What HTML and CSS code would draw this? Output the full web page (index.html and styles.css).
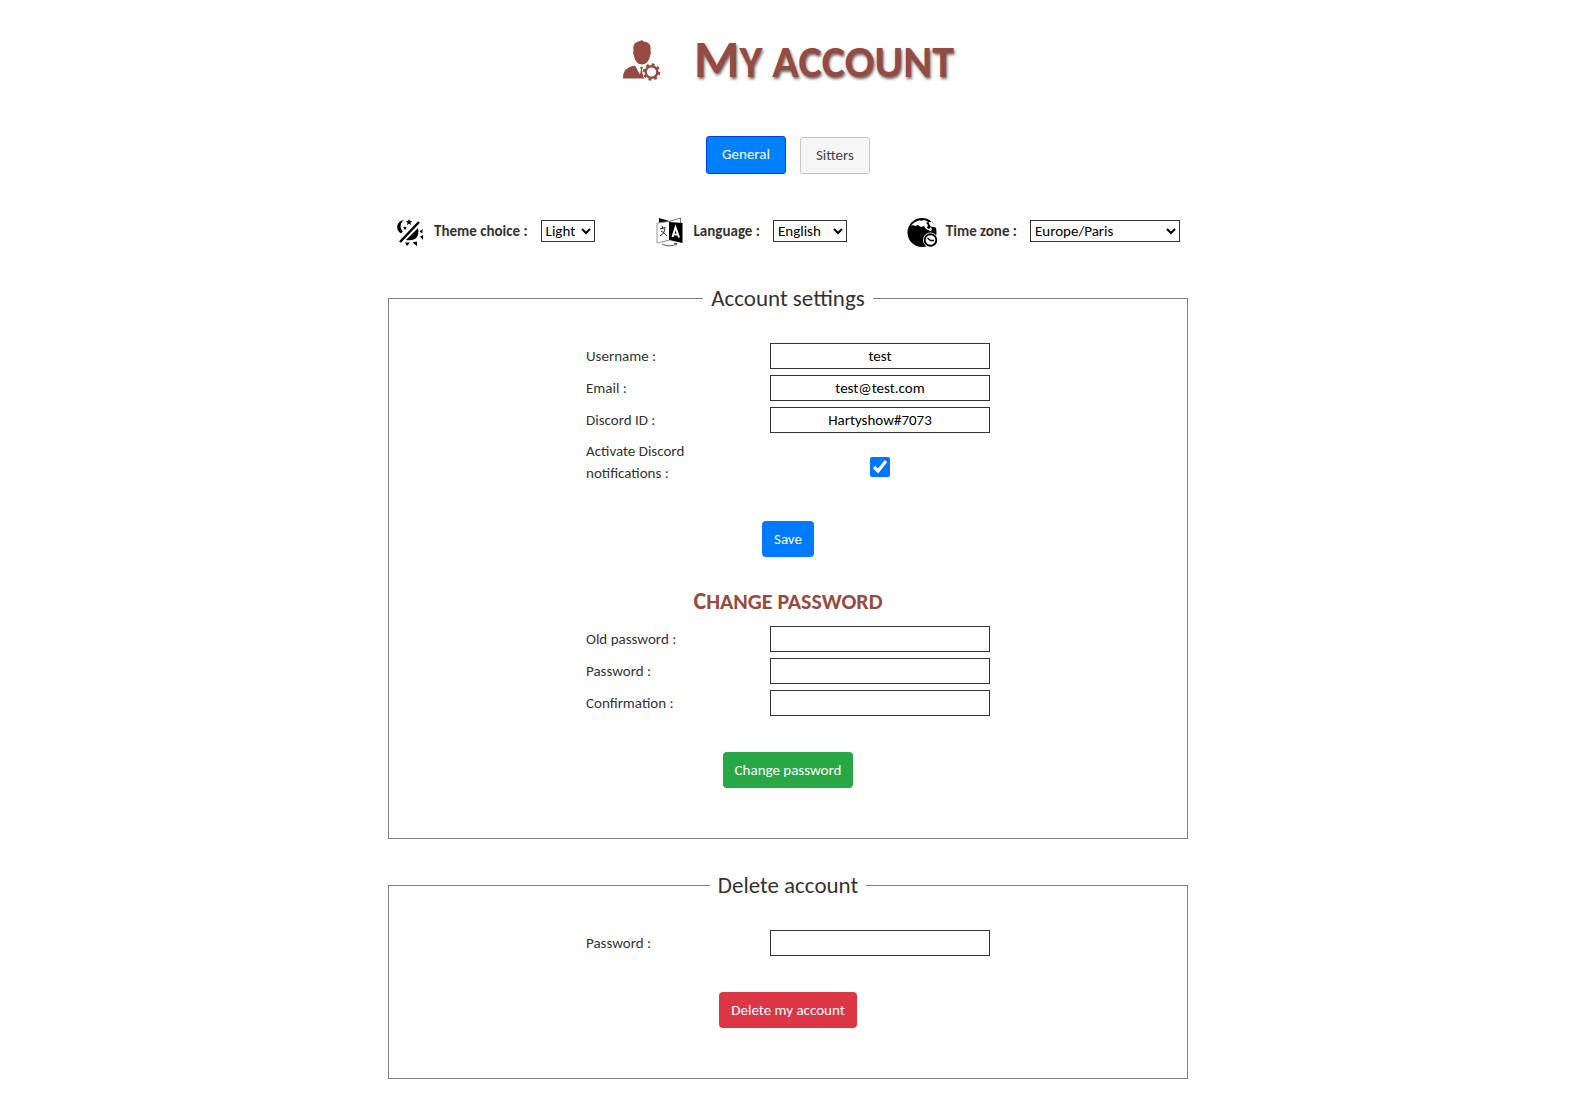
FILE: index.html
```html
<!DOCTYPE html>
<html lang="en">
<head>
    <meta charset="utf-8">
    <title>My account</title>
    <link rel="stylesheet" href="styles.css">
</head>
<body>
    <div class="container">
        <!-- Title -->
        <header class="title">
            <svg class="title-icon" viewBox="0 0 40 42" aria-hidden="true">
                <path d="M20 1c-1 1-3 1-5 2-3 1-4 4-3.500 9-.5 1-.5 3 .5 5 1 5 4 8.500 8 8.500s7-3.500 8-8.500c1-2 1-4 .5-5 .5-5-.5-8-4.500-9-2 0-3-1-4-2z"/>
                <path d="M1 39.500c0-8 3-11 12-13l5 9 1-5-1-2 1.500-1 1.500 1-1 2 .5 5 2-4c-2 3-2 6 0 8z"/>
                <circle cx="29.500" cy="33" r="5.800" fill="#fff" stroke="currentColor" stroke-width="2.400"/>
                <circle cx="29.500" cy="33" r="7.600" fill="none" stroke="currentColor" stroke-width="2.200" stroke-dasharray="2.980 2.980"/>
            </svg>
            <h1>My account</h1>
        </header>

        <!-- Tabs -->
        <nav class="tabs">
            <button type="button" class="tab active">General</button>
            <button type="button" class="tab">Sitters</button>
        </nav>

        <!-- Preferences -->
        <div class="preferences">
            <div class="preference">
                <svg class="icon" viewBox="-1 -2 30 30" aria-hidden="true">
                    <path d="M7 2C-1 3-2 12 4 15.500l1.800-2C2.500 10 3 5 7 2z"/>
                    <path d="M12 1l.9 2.100 2.300.1-1.800 1.500.7 2.300L12 5.700 9.900 7l.7-2.300-1.800-1.500 2.300-.1zM8 8l.5 1.300 1.500.2-1.100.9.300 1.500-1.200-.8-1.200.8.3-1.500-1.100-.9 1.500-.2z"/>
                    <path d="M3 24L22 4" fill="none" stroke="#000" stroke-width="2.500"/>
                    <path d="M21 10c2 9-3 13.500-12 12z"/>
                    <path d="M25.500 11v4.500l-3-2zM23 18.500l3-1.500v5zM8 24.500h5l-3 3.500zM15.500 24.500l4.500-1v4.500z"/>
                </svg>
                <label for="theme">Theme choice :</label>
                <select id="theme" class="select-theme">
                    <option>Light</option>
                    <option>Dark</option>
                </select>
            </div>
            <div class="preference">
                <svg class="icon" viewBox="0 -2 30 30" aria-hidden="true">
                    <path d="M3 0l12 3.500L3 6z"/>
                    <path d="M24.500 0L13 3.500M24.500 0v5" fill="none" stroke="#555" stroke-width=".8"/>
                    <path d="M1 5l12.500-1.500v18.500L1 25z" fill="#fff" stroke="#888" stroke-width=".9"/>
                    <path d="M13 4l13.500 1v20L13 22z"/>
                    <path d="M4 11l5-1.500c0 4-2 7-5 8.500M5 13c2 1 4 3 6 5M6 8l1 2.500" fill="none" stroke="#222" stroke-width="1"/>
                    <path d="M16.500 19l3-9.500 3.500 10M17.500 16.500h4" fill="none" stroke="#fff" stroke-width="2"/>
                    <path d="M6 26c5 2.500 11 2.500 15-.5M21 25.500l-3-.2M21 25.500l-1 2" fill="none" stroke="#444" stroke-width=".9"/>
                </svg>
                <label for="language">Language :</label>
                <select id="language" class="select-language">
                    <option>English</option>
                    <option>Français</option>
                </select>
            </div>
            <div class="preference">
                <svg class="icon" viewBox="0 -2 30 30" aria-hidden="true">
                    <circle cx="14" cy="14.500" r="14.500"/>
                    <path d="M4 6.500c2-2 5-4 9-4.500l-1 1 5-1 3 2-2 1 2 2-1 3 2 1 2-2 1 3-2 1-4-2-2-3-3 1-3-2-3 1-2-1-2 1z" fill="#fff"/>
                    <path d="M20.500 4.500l3-1 5 6-6-1z" fill="#fff"/>
                    <circle cx="22.500" cy="22" r="7.500" fill="#fff"/>
                    <circle cx="22.500" cy="22" r="5.800" fill="#fff" stroke="#000" stroke-width="1.900"/>
                    <path d="M19.500 20l3 2.500h3.500" fill="none" stroke="#000" stroke-width="1.500"/>
                </svg>
                <label for="timezone">Time zone :</label>
                <select id="timezone" class="select-timezone">
                    <option>Europe/Paris</option>
                    <option>Europe/London</option>
                </select>
            </div>
        </div>

        <!-- Account settings -->
        <fieldset>
            <legend>Account settings</legend>
            <form class="form">
                <div class="row">
                    <label for="username">Username :</label>
                    <input type="text" id="username" value="test">
                </div>
                <div class="row">
                    <label for="email">Email :</label>
                    <input type="text" id="email" value="test@test.com">
                </div>
                <div class="row">
                    <label for="discord">Discord ID :</label>
                    <input type="text" id="discord" value="Hartyshow#7073">
                </div>
                <div class="row row-check">
                    <label for="notifications">Activate Discord notifications :</label>
                    <div class="check">
                        <input type="checkbox" id="notifications" checked>
                    </div>
                </div>
                <button type="button" class="btn btn-primary">Save</button>
            </form>

            <h2>Change password</h2>
            <form class="form">
                <div class="row">
                    <label for="old-password">Old password :</label>
                    <input type="password" id="old-password">
                </div>
                <div class="row">
                    <label for="new-password">Password :</label>
                    <input type="password" id="new-password">
                </div>
                <div class="row">
                    <label for="confirmation">Confirmation :</label>
                    <input type="password" id="confirmation">
                </div>
                <button type="button" class="btn btn-success">Change password</button>
            </form>
        </fieldset>

        <!-- Delete account -->
        <fieldset>
            <legend>Delete account</legend>
            <form class="form">
                <div class="row">
                    <label for="delete-password">Password :</label>
                    <input type="password" id="delete-password">
                </div>
                <button type="button" class="btn btn-danger">Delete my account</button>
            </form>
        </fieldset>
    </div>
</body>
</html>
```
FILE: styles.css
```css
* {
    box-sizing: border-box;
}

body {
    margin: 0;
    background-color: #fff;
    color: #333;
    font-family: Calibri, Carlito, Lato, sans-serif;
    font-size: 15px;
    line-height: 22px;
}

input,
select,
button {
    font-family: inherit;
    font-size: inherit;
}

.container {
    max-width: 800px;
    margin: 0 auto;
    padding: 30px 0 22px;
}

/* Title */
.title {
    display: flex;
    justify-content: center;
    align-items: center;
    gap: 32px;
    height: 60px;
    color: #954b42;
}

.title-icon {
    width: 40px;
    height: 42px;
    fill: currentColor;
}

h1,
h2 {
    color: #954b42;
    text-transform: uppercase;
}

h1 {
    margin: 0;
    font-size: 44px;
    line-height: 60px;
    text-shadow: 1px 2px 3px rgba(0,0,0,0.6);
}

h1::first-letter {
    font-size: 52px;
}

/* Tabs */
.tabs {
    display: flex;
    justify-content: center;
    align-items: flex-end;
    gap: 14px;
    margin-top: 46px;
}

.tab {
    height: 37px;
    padding: 0 15px 2px;
    border: 1px solid #c5c5c5;
    border-radius: 3px;
    background-color: #f6f6f6;
    color: #454545;
    cursor: pointer;
}

.tab.active {
    height: 38px;
    border-color: #003eff;
    background-color: #007fff;
    color: #fff;
}

/* Preferences */
.preferences {
    display: flex;
    justify-content: space-between;
    margin: 42px 8px 0;
    padding-bottom: 6px;
}

.preference {
    display: flex;
    align-items: center;
}

.preference label {
    margin: 0 13px 0 8px;
    font-weight: bold;
}

.icon {
    width: 30px;
    height: 30px;
    overflow: visible;
}

select {
    height: 22px;
    padding: 0;
    border: 1px solid #333;
    border-radius: 0;
    background-color: #fff;
    color: #000;
}

.select-theme {
    width: 54px;
}

.select-language {
    width: 74px;
}

.select-timezone {
    width: 150px;
}

/* Blocks */
fieldset {
    margin: 30px 0 0;
    padding: 29px 0 50px;
    border: 1px solid #808080;
}

legend {
    margin: 0 auto;
    padding: 0 8px;
    font-size: 23px;
    line-height: 32px;
}

h2 {
    margin: 28px 0 8px;
    font-size: 22px;
    line-height: 32px;
    text-align: center;
}

h2::first-letter {
    font-size: 24px;
}

.form {
    display: flex;
    flex-direction: column;
    gap: 6px;
    max-width: 404px;
    margin: 0 auto;
}

.row {
    display: flex;
    justify-content: space-between;
    align-items: center;
}

.row-check {
    height: 46px;
}

.row label {
    width: 120px;
}

.row input[type="text"],
.row input[type="password"] {
    width: 220px;
    height: 26px;
    border: 1px solid #333;
    background-color: #fff;
    color: #000;
    text-align: center;
}

.check {
    display: flex;
    justify-content: center;
    width: 220px;
    padding-top: 10px;
}

.check input {
    width: 20px;
    height: 20px;
    margin: 0;
}

.btn {
    align-self: center;
    height: 36px;
    margin-top: 30px;
    padding: 0 12px;
    border: none;
    border-radius: 4px;
    color: #fff;
    cursor: pointer;
}

.btn-primary {
    background-color: #007bff;
}

.btn-success {
    background-color: #28a745;
}

.btn-danger {
    background-color: #dc3545;
}
```
